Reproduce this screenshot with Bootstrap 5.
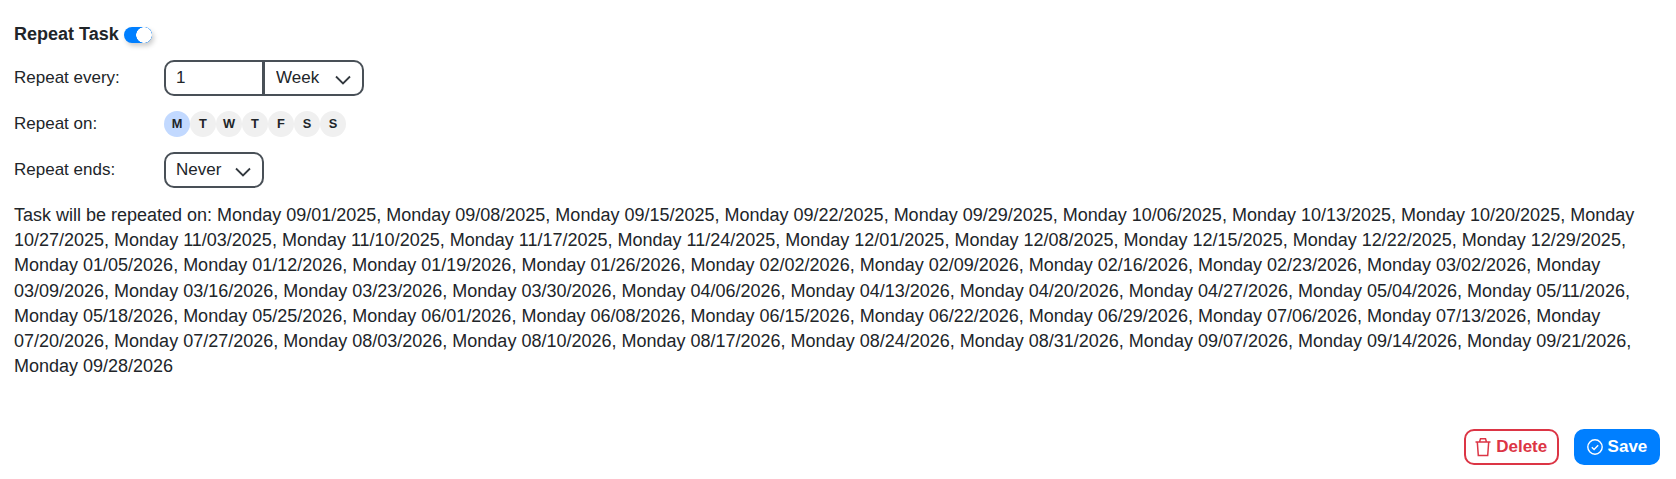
<!DOCTYPE html>
<html lang="en"><head><meta charset="utf-8">
<link rel="stylesheet" href="https://cdn.jsdelivr.net/npm/bootstrap@5.3.0/dist/css/bootstrap.min.css">
<style>
html,body{height:100%}
body{font-family:"Liberation Sans",Arial,sans-serif;font-size:18px;line-height:25.2px;color:#212529;background:#fff}
.task-pane{height:479px;padding:23px 14px 14px}
.task-title{font-weight:700;height:24px;font-size:18px}
.form-switch .task-switch.form-check-input{width:28px;height:16px;margin:0 0 0 5px;border:0;border-radius:8px;float:none;background-color:#007fff;background-image:radial-gradient(circle at 20px 8px,#fff 7.5px,transparent 8px);background-position:0 0;background-size:auto;box-shadow:2px 3px 5px rgba(0,0,0,.2)}
.task-switch-wrap{padding:0;margin:0;min-height:0;display:flex}
.task-row{font-size:17px}
.task-label{width:150px}
.task-row1{margin-top:13px}
.task-row2{margin-top:15px}
.task-row3{margin-top:15px}
.task-group{width:200px;flex-wrap:nowrap}
.task-pane .form-control,.task-pane .form-select{height:36px;border:2px solid #495057;border-radius:10px;font-size:17px;line-height:22px;color:#212529;padding-top:5px;padding-bottom:5px;box-shadow:none}
.task-pane .form-control{padding-left:10px;padding-right:4px;flex:0 0 100px;width:100px;border-top-right-radius:0;border-bottom-right-radius:0}
.task-pane .form-select{padding-left:10px;padding-right:30px;background-image:url("data:image/svg+xml,%3csvg xmlns='http://www.w3.org/2000/svg' viewBox='0 0 16 10'%3e%3cpath fill='none' stroke='%23343a40' stroke-width='1.8' d='M1 1.5l7 7 7-7'/%3e%3c/svg%3e");background-position:right 11px top 13px;background-size:16px 10px}
.task-pane .input-group .form-select{flex:0 0 101px;width:101px;padding-left:11px;border-top-left-radius:0;border-bottom-left-radius:0}
.task-never{width:100px}
.task-day{width:26px;height:26px;border-radius:50%;background:#f0f0f0;font-size:12.8px;font-weight:700;display:flex;align-items:center;justify-content:center}
.task-day.is-on{background:#c2d9ff}
.task-text{margin-top:15px}
.task-btn{height:36px;border-radius:10px;font-weight:700;font-size:17px;line-height:1;display:flex;align-items:center;gap:5px}
.task-label-up{margin-top:-2px}
.task-del{border:2px solid #dc3545;color:#dc3545;background:#fff;padding:0 9.7px}
.task-save{background:#007fff;color:#fff;border:2px solid #007fff;padding:0 10.7px}
.task-actions{gap:15px;padding-right:2px}
</style></head><body>
<div class="task-pane d-flex flex-column">
<div class="task-title d-flex align-items-center">Repeat Task <div class="form-check form-switch task-switch-wrap"><input class="form-check-input task-switch" type="checkbox" role="switch" checked aria-label="Repeat Task"></div></div>
<div class="d-flex align-items-center task-row task-row1"><div class="task-label">Repeat every:</div>
<div class="input-group task-group"><input class="form-control" type="text" value="1" aria-label="Repeat every"><select class="form-select" aria-label="Unit"><option>Week</option></select></div></div>
<div class="d-flex align-items-center task-row task-row2"><div class="task-label">Repeat on:</div>
<div class="d-flex"><span class="task-day is-on">M</span><span class="task-day">T</span><span class="task-day">W</span><span class="task-day">T</span><span class="task-day">F</span><span class="task-day">S</span><span class="task-day">S</span></div></div>
<div class="d-flex align-items-center task-row task-row3"><div class="task-label">Repeat ends:</div>
<select class="form-select task-never" aria-label="Repeat ends"><option>Never</option></select></div>
<div class="task-text">Task will be repeated on: Monday 09/01/2025, Monday 09/08/2025, Monday 09/15/2025, Monday 09/22/2025, Monday 09/29/2025, Monday 10/06/2025, Monday 10/13/2025, Monday 10/20/2025, Monday 10/27/2025, Monday 11/03/2025, Monday 11/10/2025, Monday 11/17/2025, Monday 11/24/2025, Monday 12/01/2025, Monday 12/08/2025, Monday 12/15/2025, Monday 12/22/2025, Monday 12/29/2025, Monday 01/05/2026, Monday 01/12/2026, Monday 01/19/2026, Monday 01/26/2026, Monday 02/02/2026, Monday 02/09/2026, Monday 02/16/2026, Monday 02/23/2026, Monday 03/02/2026, Monday 03/09/2026, Monday 03/16/2026, Monday 03/23/2026, Monday 03/30/2026, Monday 04/06/2026, Monday 04/13/2026, Monday 04/20/2026, Monday 04/27/2026, Monday 05/04/2026, Monday 05/11/2026, Monday 05/18/2026, Monday 05/25/2026, Monday 06/01/2026, Monday 06/08/2026, Monday 06/15/2026, Monday 06/22/2026, Monday 06/29/2026, Monday 07/06/2026, Monday 07/13/2026, Monday 07/20/2026, Monday 07/27/2026, Monday 08/03/2026, Monday 08/10/2026, Monday 08/17/2026, Monday 08/24/2026, Monday 08/31/2026, Monday 09/07/2026, Monday 09/14/2026, Monday 09/21/2026, Monday 09/28/2026</div>
<div class="mt-auto d-flex justify-content-end task-actions">
<button class="task-btn task-del"><svg width="16" height="20" viewBox="0 0 16 20" fill="none" stroke="#dc3545" stroke-width="1.5"><path d="M.5 5h15M4.5 5l1-3.2h5l1 3.2M2.3 5l1 13.5h9.4l1-13.5"/></svg><span class="task-label-up">Delete</span></button>
<button class="task-btn task-save"><svg width="16" height="16" viewBox="0 0 16 16" fill="none" stroke="#fff" stroke-width="1.4"><circle cx="8" cy="8" r="7.2"/><path d="M4.8 8.2l2.3 2.2 4.1-4.2"/></svg><span class="task-label-up">Save</span></button>
</div>
</div>
</body></html>
